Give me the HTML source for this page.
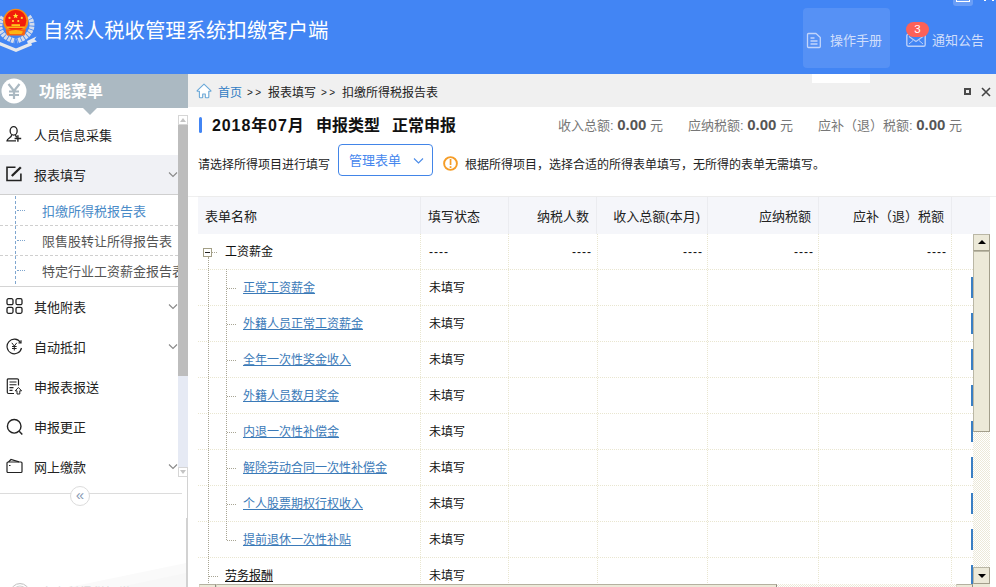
<!DOCTYPE html>
<html lang="zh-CN">
<head>
<meta charset="utf-8">
<title>自然人税收管理系统扣缴客户端</title>
<style>
*{box-sizing:border-box;margin:0;padding:0}
html,body{width:996px;height:587px;overflow:hidden;background:#fff}
body{font-family:"Liberation Sans","Noto Sans CJK SC",sans-serif;font-size:12px;color:#333;position:relative}
.abs{position:absolute}
#hdr{left:0;top:0;width:996px;height:74px;background:#4285f4}
#title{left:43px;top:16px;font-size:20.4px;line-height:30px;color:#fff;white-space:nowrap}
#hbtn{left:803px;top:8px;width:87px;height:60px;background:#5691f5;border-radius:4px}
.htxt{color:#d0defb;font-size:13px;line-height:20px;white-space:nowrap}
#badge{left:906px;top:22px;width:23px;height:15px;border-radius:7.500px;background:#fd6158;color:#fff;font-size:11.500px;line-height:15px;text-align:center}
#tip{left:812px;top:74px;width:58px;height:9px;background:#fff;z-index:5}
#mh{left:0;top:74px;width:188px;height:34px;background:#abb9c2}
#mh .t{left:39px;top:6px;font-size:16px;line-height:24px;color:#fff;font-weight:bold;white-space:nowrap}
#tri{z-index:5;left:83px;top:108px;width:0;height:0;border-left:7.5px solid transparent;border-right:7.5px solid transparent;border-top:7px solid #abb9c2}
#side{left:0;top:108px;width:188px;height:479px;background:#fff;overflow:hidden}
.mi{left:0;width:178px;height:40px;font-size:13px;line-height:40px;color:#222;white-space:nowrap}
.mi .tx{position:absolute;left:34px;top:1px}
.mi svg.ic{position:absolute;left:5px;top:11px}
.mi svg.cv{position:absolute;left:168px;top:16px}
.si{left:0;width:178px;height:30px;font-size:13px;line-height:30px;color:#555;white-space:nowrap;overflow:hidden}
.si .tx{position:absolute;left:42px;top:2px}
.si .dots{position:absolute;left:17px;top:15px;width:8px;border-top:1px dotted #7fa6cf}
#bc{left:188px;top:74px;width:808px;height:33px;background:#f0f0f0}
#bc .t{top:2px;font-size:12px;line-height:34px;white-space:nowrap;color:#222}
.sum{top:114px;font-size:13px;line-height:22px;color:#777;white-space:nowrap}
.sum b{font-size:15px;color:#555}
table{border-collapse:collapse}
#th{left:198px;top:197px;width:792px;height:37px;background:#f5f6fa}
#th div{position:absolute;top:0;height:37px;line-height:39px;font-size:13px;color:#222;white-space:nowrap;border-right:1px solid #ebecf0}
.row{left:198px;width:775px;height:37px;border-bottom:1px dotted #e9e6d0}
.row div{position:absolute;top:0;height:36px;line-height:38px;font-size:12px;color:#111;white-space:nowrap}
.row .d{letter-spacing:1px}
.row a{color:#3b7ab8;text-decoration:underline}
.vl{top:234px;width:0;height:351px;border-left:1px dotted #e9e6d0}
.sbb{background:#ece9d8;border:1px solid;border-color:#bab7a5 #a29e8b #a29e8b #bab7a5}
.chk{background-color:#fff;background-image:linear-gradient(45deg,#ece9d8 25%,transparent 25%,transparent 75%,#ece9d8 75%),linear-gradient(45deg,#ece9d8 25%,transparent 25%,transparent 75%,#ece9d8 75%);background-size:2px 2px;background-position:0 0,1px 1px}
.sbh{background:#ece9d8;border:1px solid;border-color:#b4b1a0 #8f8d80 #716f64 #d8d5c4}
.bb{left:971px;width:2px;height:21px;background:#3a7fc4}
</style>
</head>
<body>
<!-- header -->
<div id="hdr" class="abs">
  <svg class="abs" style="left:0;top:0" width="40" height="56" viewBox="0 0 40 56">
    <path d="M3 17 C-4 27 1 37.500 15 41" fill="none" stroke="#d4dcec" stroke-width="5" stroke-dasharray="2.800 .8"/>
    <path d="M28.500 16.500 C35.500 24 32 36.500 17 41" fill="none" stroke="#d4dcec" stroke-width="5" stroke-dasharray="2.800 .8"/>
    <path d="M27 41 L36.500 36.500 L34.500 39.500 L37 41.500 L28 44z" fill="#e4e9f3"/>
    <path d="M-1 43.300 L16 50.200 L31.500 43.800" fill="none" stroke="#e6e8ec" stroke-width="3.200"/>
    <circle cx="15.750" cy="21.300" r="12.600" fill="#fa8a12"/>
    <circle cx="15.750" cy="20.600" r="10.600" fill="#f21d0a"/>
    <path d="M5.500 29.500 H26 L24.500 35.500 H7z" fill="#f96414"/>
    <path d="M8.500 31.500 Q15.750 28.500 23 31.500 L21.500 34 H10z" fill="#fdb515"/>
    <rect x="11.500" y="24.200" width="8.500" height="2" fill="#fdc81a"/>
    <rect x="7" y="26.500" width="17.500" height="1.600" fill="#fdb515"/>
    <path d="M15.600 13 l.8 1.900 2 .1 -1.600 1.300 .6 2 -1.800 -1.100 -1.800 1.100 .6 -2 -1.600 -1.300 2 -.1z" fill="#ffe63a"/>
    <circle cx="9.500" cy="17.900" r="1.100" fill="#ffd83a"/><circle cx="21.800" cy="17.900" r="1.100" fill="#ffd83a"/>
    <circle cx="13" cy="21" r="1.100" fill="#ffd83a"/><circle cx="18.300" cy="21" r="1.100" fill="#ffd83a"/>
  </svg>
  <div id="title" class="abs">自然人税收管理系统扣缴客户端</div>
  <div id="hbtn" class="abs"></div>
  <svg class="abs" style="left:806px;top:32px" width="16" height="17" viewBox="0 0 16 17" fill="none" stroke="#c3d5fb" stroke-width="1.300" stroke-linejoin="round">
    <path d="M2.500 1.500 H10 L14.300 5.500 V14.500 Q14.300 15.500 13.300 15.500 H2.500 Q1.500 15.500 1.500 14.500 V2.500 Q1.500 1.500 2.500 1.500z"/><path d="M4.500 6 h4 M4.500 9 h7 M4.500 12 h7"/>
  </svg>
  <div class="abs htxt" style="left:830px;top:31px">操作手册</div>
  <svg class="abs" style="left:906px;top:33px" width="20" height="14" viewBox="0 0 20 14" fill="none" stroke="#b9cffa" stroke-width="1.400">
    <rect x=".8" y="1.200" width="18.400" height="12" rx="1.500"/><path d="M3 3.500 L10 8.500 L17 3.500" stroke-width="1.100"/><path d="M3 11 L7 7.500 M17 11 L13 7.500" stroke-width="1"/>
  </svg>
  <div id="badge" class="abs">3</div>
  <div class="abs htxt" style="left:932px;top:31px">通知公告</div>
  <div class="abs" style="left:953px;top:-4px;width:20px;height:10px;border-radius:3px;background:#6a9ef6"></div>
  <div class="abs" style="left:956px;top:-4px;width:14px;height:6px;border:1px solid #fff"></div>
  <div class="abs" style="left:984px;top:0;width:2px;height:1px;background:#fff"></div>
  <div class="abs" style="left:992px;top:0;width:2px;height:1px;background:#fff"></div>
</div>
<div id="tip" class="abs"></div>

<!-- menu head -->
<div id="mh" class="abs">
  <svg class="abs" style="left:1px;top:4px" width="26" height="26" viewBox="0 0 26 26">
    <circle cx="13" cy="13" r="12.5" fill="#fff"/>
    <path d="M7.5 6 L13 13 L18.5 6 M13 13 V21 M8 13.5 H18 M8 17 H18" fill="none" stroke="#abb9c2" stroke-width="2.2"/>
  </svg>
  <div class="t abs">功能菜单</div>
</div>
<div id="tri" class="abs"></div>

<!-- sidebar -->
<div id="side" class="abs">
  <div class="mi abs" style="top:7px">
    <svg class="ic" width="18" height="17" viewBox="0 0 18 17" fill="none" stroke="#222" stroke-width="1.3"><ellipse cx="8.650" cy="4.900" rx="3.500" ry="4.200"/><path d="M6.800 8.600 C6.800 12 2.200 11.800 2 14.800 H11"/><path d="M10.500 8.600 C10.500 10 11 10.800 12 11.300"/><path d="M12.900 9.200 v6.600 M9.600 12.500 h6.600" stroke-width="1.400"/></svg>
    <span class="tx">人员信息采集</span>
  </div>
  <div class="mi abs" style="top:47px;background:#f0f1f5;border-bottom:1px solid #cfcfcf">
    <svg class="ic" width="18" height="17" viewBox="0 0 18 17" fill="none" stroke="#222" stroke-width="1.6"><path d="M10.500 1.300 H2 V14.500 H15.900 V7.500"/><path d="M6.800 10 L15.800 1.200" stroke-width="2.300"/></svg>
    <span class="tx">报表填写</span>
    <svg class="cv" width="10" height="8" viewBox="0 0 10 8" fill="none" stroke="#888" stroke-width="1.1"><path d="M1 1.500 L5 5.500 L9 1.500"/></svg>
  </div>
  <div class="abs" style="left:15px;top:88px;width:0;height:88px;border-left:1px dashed #7fa6cf"></div>
  <div class="si abs" style="top:87px;height:31px;border-bottom:1px dashed #cfcfcf"><i class="dots"></i><span class="tx" style="color:#4a8bc8">扣缴所得税报告表</span></div>
  <div class="si abs" style="top:118px;border-bottom:1px dashed #cfcfcf"><i class="dots" style="top:14px"></i><span class="tx" style="top:1px">限售股转让所得报告表</span></div>
  <div class="si abs" style="top:148px"><i class="dots" style="top:14px"></i><span class="tx" style="top:1px">特定行业工资薪金报告表</span></div>
  <div class="abs" style="left:0;top:178px;width:178px;height:1px;background:#d4d4d4"></div>
  <div class="mi abs" style="top:179px">
    <svg class="ic" style="left:5.700px" width="17" height="16" viewBox="0 0 17 16" fill="none" stroke="#222" stroke-width="1.3"><rect x="1" y=".7" width="6" height="6" rx="1.500"/><rect x="10" y=".7" width="6" height="6" rx="1.500"/><rect x="1" y="9.300" width="6" height="6" rx="1.500"/><rect x="10" y="9.300" width="6" height="6" rx="1.500"/></svg>
    <span class="tx">其他附表</span>
    <svg class="cv" width="10" height="8" viewBox="0 0 10 8" fill="none" stroke="#888" stroke-width="1.1"><path d="M1 1.500 L5 5.500 L9 1.500"/></svg>
  </div>
  <div class="mi abs" style="top:219px">
    <svg class="ic" style="left:6px" width="17" height="17" viewBox="0 0 17 17" fill="none" stroke="#222" stroke-width="1.2"><path d="M14.500 4.500 A7.300 7.300 0 1 0 15.500 10"/><path d="M12.500 4.800 h2.500 v-2.500" /><path d="M5.800 4.800 L8.300 8 L10.800 4.800 M8.300 8 V12.500 M6 8.500 h4.600 M6 10.500 h4.600" stroke-width="1"/></svg>
    <span class="tx">自动抵扣</span>
    <svg class="cv" width="10" height="8" viewBox="0 0 10 8" fill="none" stroke="#888" stroke-width="1.1"><path d="M1 1.500 L5 5.500 L9 1.500"/></svg>
  </div>
  <div class="mi abs" style="top:259px">
    <svg class="ic" style="left:5.500px" width="18" height="17" viewBox="0 0 18 17" fill="none" stroke="#222" stroke-width="1.200"><path d="M8 15.500 H2.500 Q1.300 15.500 1.300 14.300 V1.800 Q1.300 .8 2.500 .8 H11.300 Q12.500 .8 12.500 1.800 V7.500"/><path d="M3.500 4 h7 M3.500 6.800 h7 M3.500 9.600 h4 M3.500 12.400 h3" stroke-width="1.100"/><path d="M11 16 v-3.200 h-1.800 l3.200 -3.300 l3.200 3.300 h-1.800 v3.200z" stroke-width="1"/></svg>
    <span class="tx">申报表报送</span>
  </div>
  <div class="mi abs" style="top:299px">
    <svg class="ic" style="left:5.500px" width="18" height="18" viewBox="0 0 18 18" fill="none" stroke="#222" stroke-width="1.400"><circle cx="8.200" cy="8.300" r="6.800"/><path d="M13.200 13.300 L16.300 16.600"/></svg>
    <span class="tx">申报更正</span>
    </div>
  <div class="mi abs" style="top:339px">
    <svg class="ic" style="left:5.700px" width="17" height="16" viewBox="0 0 17 16" fill="none" stroke="#222" stroke-width="1.2"><rect x="1" y="4" width="15" height="10.500" rx="1"/><path d="M2.500 4 L5 1.500 L13 3.800"/><path d="M3 7.500 h1.500"/></svg>
    <span class="tx">网上缴款</span>
    <svg class="cv" width="10" height="8" viewBox="0 0 10 8" fill="none" stroke="#888" stroke-width="1.1"><path d="M1 1.500 L5 5.500 L9 1.500"/></svg>
  </div>
  <!-- sidebar scrollbar -->
  <div class="abs" style="left:178px;top:7px;width:10px;height:362px;background:#e6eaf4"></div>
  <div class="abs" style="left:178px;top:7px;width:10px;height:10px;background:#fff;border:1px solid #d6d6d6"></div>
  <div class="abs" style="left:180px;top:10px;width:0;height:0;border-left:3px solid transparent;border-right:3px solid transparent;border-bottom:4px solid #c4c4c4"></div>
  <div class="abs" style="left:178px;top:17px;width:10px;height:251px;background:#bdbdbd"></div>
  <div class="abs" style="left:178px;top:359px;width:10px;height:10px;background:#fff;border:1px solid #d6d6d6"></div>
  <div class="abs" style="left:180px;top:362px;width:0;height:0;border-left:3px solid transparent;border-right:3px solid transparent;border-top:4px solid #c4c4c4"></div>
  <div class="abs" style="left:187px;top:369px;width:1px;height:41px;background:#d2d2d2"></div>
  <div class="abs" style="left:186px;top:410px;width:2px;height:69px;background:#d2d2d2"></div>
  <!-- collapse -->
  <div class="abs" style="left:0;top:385px;width:182px;height:1px;background:#dcdcdc"></div>
  <div class="abs" style="left:70px;top:378px;width:20px;height:20px;border-radius:10px;border:1px solid #dcdcdc;background:#fff;color:#8a9bb5;font-size:15px;line-height:15px;text-align:center">«</div>
  <svg class="abs" style="left:60px;top:447px" width="126" height="32" viewBox="0 0 126 32"><polygon points="10,32 126,8 126,32" fill="#fafafa"/><polygon points="60,32 126,18 126,32" fill="#f7f7f7"/></svg>
  <div class="abs" style="left:40px;top:474px;font-size:13px;color:#dadada;white-space:nowrap">个人所得税扣缴</div>
  <div class="abs" style="left:10px;top:475px;width:20px;height:20px;border-radius:10px;border:1px solid #c4c4c4;box-shadow:inset 0 0 0 1.500px #fff,inset 0 0 0 2.500px #d0d0d0"></div>
</div>

<!-- breadcrumb -->
<div id="bc" class="abs">
  <svg class="abs" style="left:8px;top:9px" width="16" height="16" viewBox="0 0 16 16" fill="#fff" stroke="#6aa8d8" stroke-width="1.100" stroke-linejoin="round"><path d="M8 1.200 L1.200 7.600 Q.8 8.300 1.800 8.300 H3.400 V14 Q3.400 14.800 4.200 14.800 H6 Q6.700 14.800 6.700 14 V11 H9.300 V14 Q9.300 14.800 10 14.800 H12 Q12.800 14.800 12.800 14 V8.300 H14.400 Q15.300 8.300 14.800 7.600 Z"/></svg>
  <div class="t abs" style="left:30px;color:#2f7cc4">首页</div>
  <div class="t abs" style="left:59px;letter-spacing:2.500px;font-size:10px">&gt;&gt;</div>
  <div class="t abs" style="left:80px">报表填写</div>
  <div class="t abs" style="left:133px;letter-spacing:2.500px;font-size:10px">&gt;&gt;</div>
  <div class="t abs" style="left:154px">扣缴所得税报告表</div>
  <div class="abs" style="left:776px;top:14px;width:7px;height:7px;border:2px solid #4a4a4a"></div>
  <svg class="abs" style="left:793px;top:13px" width="10" height="10" viewBox="0 0 10 10" stroke="#444" stroke-width="1.600"><path d="M1 1 L9 9 M9 1 L1 9"/></svg>
</div>

<!-- title row -->
<div class="abs" style="left:199px;top:117px;width:3px;height:16px;background:#4285f4;border-radius:1.500px"></div>
<div class="abs" style="left:212px;top:114px;font-size:16px;line-height:24px;font-weight:bold;color:#111;white-space:nowrap;letter-spacing:.9px">2018年07月</div>
<div class="abs" style="left:316px;top:114px;font-size:16px;line-height:24px;font-weight:bold;color:#111;white-space:nowrap">申报类型</div>
<div class="abs" style="left:392px;top:114px;font-size:16px;line-height:24px;font-weight:bold;color:#111;white-space:nowrap">正常申报</div>
<div class="abs sum" style="left:558px">收入总额: <b>0.00</b> 元</div>
<div class="abs sum" style="left:688px">应纳税额: <b>0.00</b> 元</div>
<div class="abs sum" style="left:818px">应补（退）税额: <b>0.00</b> 元</div>

<!-- filter row -->
<div class="abs" style="left:198px;top:154px;font-size:12px;line-height:22px;color:#222;white-space:nowrap">请选择所得项目进行填写</div>
<div class="abs" style="left:338px;top:144px;width:95px;height:32px;border:1px solid #4285e8;border-radius:4px;background:#fff"></div>
<div class="abs" style="left:349px;top:150.5px;font-size:13px;line-height:20px;color:#4486ee;white-space:nowrap">管理表单</div>
<svg class="abs" style="left:413px;top:157px" width="11" height="8" viewBox="0 0 11 8" fill="none" stroke="#4a8be8" stroke-width="1.1"><path d="M1 1.500 L5.500 6 L10 1.500"/></svg>
<svg class="abs" style="left:442.300px;top:155px" width="17" height="17" viewBox="0 0 17 17"><circle cx="8.500" cy="8.500" r="6.400" fill="none" stroke="#f59d28" stroke-width="1.900"/><rect x="7.700" y="4" width="1.700" height="6" fill="#f59d28"/><rect x="7.700" y="11.200" width="1.700" height="1.800" fill="#f59d28"/></svg>
<div class="abs" style="left:465px;top:154px;font-size:12px;line-height:22px;color:#222;white-space:nowrap">根据所得项目，选择合适的所得表单填写，无所得的表单无需填写。</div>

<!-- table area -->
<div class="abs" style="left:188px;top:196px;width:808px;height:1px;background:#efefef"></div>
<div class="abs" style="left:198px;top:196px;width:792px;height:391px;background:#fff;border-top:1px solid #ececec"></div>
<div id="th" class="abs">
  <div style="left:0;width:223px;padding-left:7px">表单名称</div>
  <div style="left:223px;width:88px;padding-left:7px">填写状态</div>
  <div style="left:311px;width:88px;text-align:right;padding-right:7px">纳税人数</div>
  <div style="left:399px;width:111px;text-align:right;padding-right:7px">收入总额(本月)</div>
  <div style="left:510px;width:111px;text-align:right;padding-right:7px">应纳税额</div>
  <div style="left:621px;width:133px;text-align:right;padding-right:7px">应补（退）税额</div>
</div>
<div id="rows">
<div class="row abs" style="top:233px"><div style="left:27px">工资薪金</div><div style="left:231px" class="d">----</div><div style="left:311px;width:83px;text-align:right" class="d">----</div><div style="left:399px;width:106px;text-align:right" class="d">----</div><div style="left:510px;width:106px;text-align:right" class="d">----</div><div style="left:621px;width:128px;text-align:right" class="d">----</div></div>
<div class="row abs" style="top:269px"><div style="left:45px"><a>正常工资薪金</a></div><div style="left:231px">未填写</div></div>
<div class="abs" style="left:227px;top:288px;width:9px;border-top:1px dotted #a8a594"></div>
<div class="bb abs" style="top:277px"></div>
<div class="row abs" style="top:305px"><div style="left:45px"><a>外籍人员正常工资薪金</a></div><div style="left:231px">未填写</div></div>
<div class="abs" style="left:227px;top:324px;width:9px;border-top:1px dotted #a8a594"></div>
<div class="bb abs" style="top:313px"></div>
<div class="row abs" style="top:341px"><div style="left:45px"><a>全年一次性奖金收入</a></div><div style="left:231px">未填写</div></div>
<div class="abs" style="left:227px;top:360px;width:9px;border-top:1px dotted #a8a594"></div>
<div class="bb abs" style="top:349px"></div>
<div class="row abs" style="top:377px"><div style="left:45px"><a>外籍人员数月奖金</a></div><div style="left:231px">未填写</div></div>
<div class="abs" style="left:227px;top:396px;width:9px;border-top:1px dotted #a8a594"></div>
<div class="bb abs" style="top:385px"></div>
<div class="row abs" style="top:413px"><div style="left:45px"><a>内退一次性补偿金</a></div><div style="left:231px">未填写</div></div>
<div class="abs" style="left:227px;top:432px;width:9px;border-top:1px dotted #a8a594"></div>
<div class="bb abs" style="top:421px"></div>
<div class="row abs" style="top:449px"><div style="left:45px"><a>解除劳动合同一次性补偿金</a></div><div style="left:231px">未填写</div></div>
<div class="abs" style="left:227px;top:468px;width:9px;border-top:1px dotted #a8a594"></div>
<div class="bb abs" style="top:457px"></div>
<div class="row abs" style="top:485px"><div style="left:45px"><a>个人股票期权行权收入</a></div><div style="left:231px">未填写</div></div>
<div class="abs" style="left:227px;top:504px;width:9px;border-top:1px dotted #a8a594"></div>
<div class="bb abs" style="top:493px"></div>
<div class="row abs" style="top:521px"><div style="left:45px"><a>提前退休一次性补贴</a></div><div style="left:231px">未填写</div></div>
<div class="abs" style="left:227px;top:540px;width:9px;border-top:1px dotted #a8a594"></div>
<div class="bb abs" style="top:529px"></div>
<div class="row abs" style="top:557px;border-bottom:none"><div style="left:27px"><a style="color:#111">劳务报酬</a></div><div style="left:231px">未填写</div></div>
<div class="abs" style="left:209px;top:576px;width:9px;border-top:1px dotted #a8a594"></div>
<div class="bb abs" style="top:565px"></div>
<div class="vl abs" style="left:420px"></div>
<div class="vl abs" style="left:508px"></div>
<div class="vl abs" style="left:597px"></div>
<div class="vl abs" style="left:707px"></div>
<div class="vl abs" style="left:818px"></div>
<div class="vl abs" style="left:951px"></div>
<div class="abs" style="left:208px;top:257px;width:0;height:328px;border-left:1px dotted #a8a594"></div>
<div class="abs" style="left:226px;top:269px;width:0;height:271px;border-left:1px dotted #a8a594"></div>
<div class="abs" style="left:212px;top:252px;width:5px;border-top:1px dotted #a8a594"></div>
<div class="abs" style="left:203px;top:248px;width:9px;height:9px;border:1px solid #a39f86;background:#fff"></div>
<div class="abs" style="left:205px;top:252px;width:5px;height:1px;background:#222"></div>
<div class="abs chk" style="left:973px;top:234px;width:17px;height:351px"></div>
<div class="abs sbb" style="left:973px;top:234px;width:17px;height:17px"></div>
<div class="abs" style="left:978px;top:240px;width:0;height:0;border-left:4px solid transparent;border-right:4px solid transparent;border-bottom:4px solid #000"></div>
<div class="abs sbb" style="left:973px;top:251px;width:17px;height:181px"></div>
<div class="abs sbb" style="left:973px;top:567px;width:17px;height:17px"></div>
<div class="abs" style="left:978px;top:574px;width:0;height:0;border-left:4px solid transparent;border-right:4px solid transparent;border-top:4px solid #000"></div>
<div class="abs chk" style="left:199px;top:584px;width:774px;height:3px"></div>
<div class="abs sbh" style="left:199px;top:584px;width:17px;height:17px"></div>
<div class="abs sbh" style="left:216px;top:584px;width:561px;height:17px"></div>
<div class="abs sbh" style="left:956px;top:584px;width:17px;height:17px"></div>
<div class="abs" style="left:973px;top:584px;width:17px;height:3px;background:#ece9d8"></div>
</div>
</body>
</html>
